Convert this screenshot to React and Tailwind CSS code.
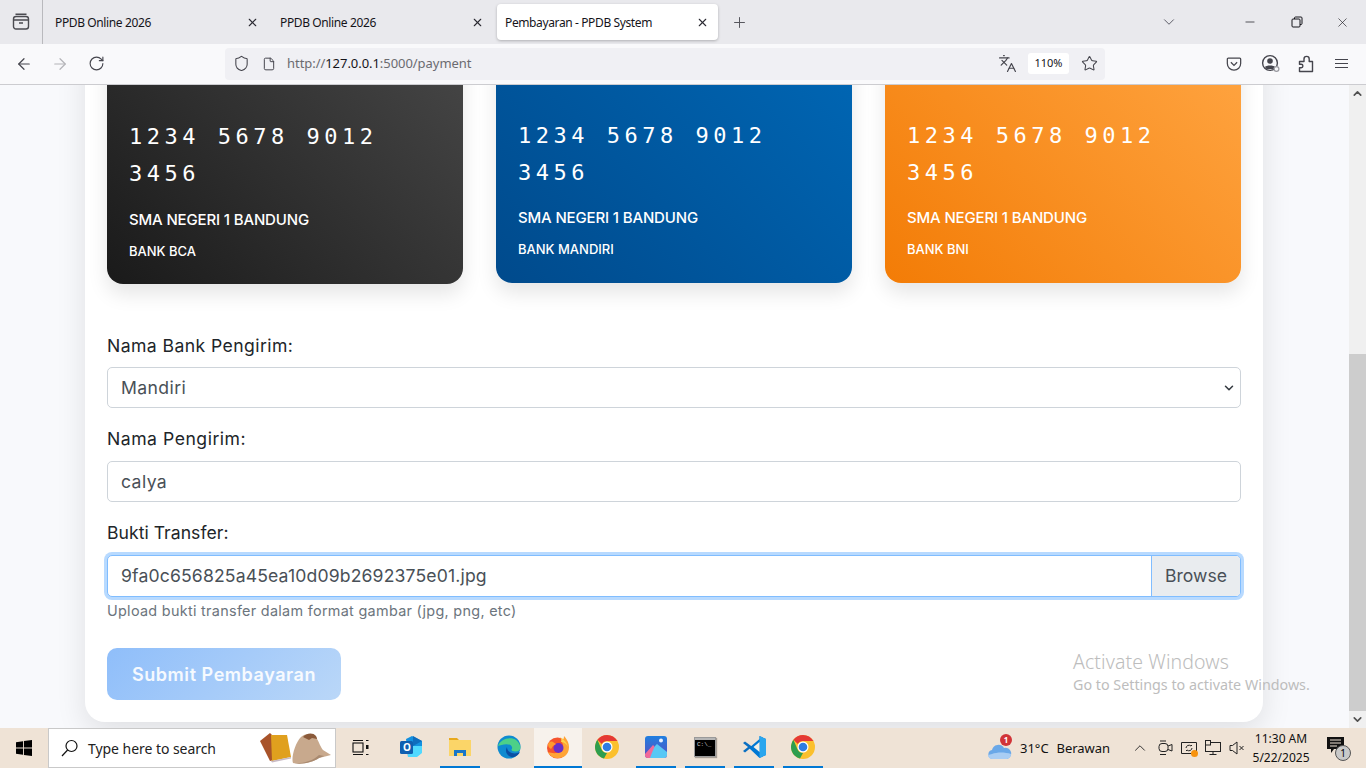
import { ArrowLeft, ArrowRight, ChevronDown, ChevronUp, File, Languages, Minus, Plus, RotateCw, Shield, Star, X } from 'lucide-react'

const bankCards = [
  { bank: 'BANK BCA', bg: 'bg-[linear-gradient(45deg,#1a1a1a,#474747)]', offset: 'pb-[23px]', gap: 'mt-[16px]' },
  { bank: 'BANK MANDIRI', bg: 'bg-[linear-gradient(45deg,#004a8c,#0067b5)]', offset: 'mb-px pb-[24px]', gap: 'mt-[15px]' },
  { bank: 'BANK BNI', bg: 'bg-[linear-gradient(45deg,#f37c06,#ffa542)]', offset: 'mb-px pb-[24px]', gap: 'mt-[15px]' },
]

const Tab = ({ title, active }) => (
  <div
    className={`flex h-9 w-[221px] shrink-0 items-center justify-between rounded pl-2 pr-[9px] ${
      active ? 'bg-white shadow-[0_1px_3px_rgba(0,0,0,0.25)]' : ''
    }`}
  >
    <span className="pt-[2px] text-[12px] tracking-[-0.38px] text-[#15141a]">{title}</span>
    <X size={13} strokeWidth={2} className="text-[#2b2a33]" />
  </div>
)

// firefox view
const ViewIcon = () => (
  <svg width="18" height="18" viewBox="0 0 18 18" fill="none" stroke="#4a4a50" strokeWidth="1.4">
    <rect x="1.5" y="3.5" width="15" height="12.5" rx="2.5" />
    <path d="M3.5 1.2h11M1.5 7h15M7 10h4" />
  </svg>
)

const PocketIcon = () => (
  <svg width="16" height="16" viewBox="0 0 18 18" fill="none" stroke="#45454d" strokeWidth="1.4">
    <path d="M2.5 2.5h13a1 1 0 0 1 1 1v5a7.5 7.5 0 0 1-15 0v-5a1 1 0 0 1 1-1z" />
    <path d="M5.5 7l3.5 3.5L12.5 7" />
  </svg>
)

const AccountIcon = () => (
  <svg width="20" height="20" viewBox="0 0 20 20" fill="none">
    <circle cx="9" cy="9" r="7.4" stroke="#45454d" strokeWidth="1.4" />
    <circle cx="9" cy="7" r="2.8" fill="#45454d" />
    <path d="M4 13c1-2 9-2 10 0l-1.5 2h-7z" fill="#45454d" />
    <circle cx="15.5" cy="15" r="2.4" fill="#f9f9fb" stroke="#9a9aa0" strokeWidth="1.2" />
  </svg>
)

const PuzzleIcon = () => (
  <svg width="16" height="18" viewBox="0 0 16 18" fill="none" stroke="#45454d" strokeWidth="1.4" strokeLinejoin="round">
    <path d="M1.5 6.500H6V4a2.600 2.600 0 0 1 5.200 0v2.500h3.300V16.500H1.500v-3.800h1.700a1.700 1.700 0 0 0 0-3.400H1.500z" />
  </svg>
)

const RestoreIcon = () => (
  <svg width="12" height="12" viewBox="0 0 12 12" fill="none" stroke="#15141a" strokeWidth="1">
    <rect x="1" y="3" width="8" height="8" rx="1" />
    <path d="M3.5 3V2a1 1 0 0 1 1-1H10a1 1 0 0 1 1 1v5.5a1 1 0 0 1-1 1H9" />
  </svg>
)

const WindowsLogo = () => (
  <svg width="16" height="16" viewBox="0 0 16 16" fill="#000">
    <path d="M0 2.2l7-1v6.4H0zM7.9 1.1L16 0v7.6H7.9zM0 8.4h7v6.4l-7-1zM7.9 8.4H16V16l-8.1-1.1z" />
  </svg>
)

const SearchMirrored = () => (
  <svg width="18" height="18" viewBox="0 0 18 18" fill="none" stroke="#111" strokeWidth="1.2">
    <circle cx="10.5" cy="7" r="5.5" />
    <path d="M6.6 11L1 17" />
  </svg>
)

const BookAndHat = () => (
  <svg width="72" height="32" viewBox="0 0 72 32">
    <path d="M0 9L10 1l2 2 2 25-4 1z" fill="#a8532a" />
    <path d="M11 3h16l4 22-19 4z" fill="#e0a01e" />
    <path d="M11 29l20-4v1.500l-19 4z" fill="#c7b9c4" />
    <path d="M33 31c-2-5 2-20 8-26 4-4 12-4 15 0 3 5 5 11 7 13l8 5-12 3c-6 4-17 7-26 5z" fill="#c8a98d" />
    <path d="M43 5c3-4 10-5 13-1 1 2 1 3 1 3l-5-1-3 2z" fill="#8a5a3a" />
    <path d="M33 31c9 1 20-2 26-8l5 1-5 2c-6 4-17 7-26 5z" fill="#a98a70" />
  </svg>
)

const TaskView = () => (
  <svg width="17" height="17" viewBox="0 0 17 17" fill="none" stroke="#111" strokeWidth="1.1">
    <rect x="1" y="4" width="10" height="9" />
    <path d="M1 1.5h10M1 15.5h10M14 1.5h2.5M14 15.5h2.5" />
    <rect x="14" y="6" width="2.5" height="4" fill="#111" stroke="none" />
  </svg>
)

const OutlookIcon = () => (
  <div className="relative h-6 w-6">
    <svg width="24" height="24" viewBox="0 0 24 24">
      <path d="M7 4l6-3 10 5v11l-6 5H9z" fill="#1490df" />
      <path d="M14 1l9 5-9 5z" fill="#0f6cbd" />
      <path d="M9 22V11h14v7l-5 4z" fill="#50d9ff" />
      <rect x="1" y="6" width="13" height="13" rx="1.5" fill="#0f5fb0" />
    </svg>
    <span className="absolute left-[4px] top-[6px] text-[10px] font-bold leading-[13px] text-white">O</span>
  </div>
)

const FolderIcon = () => (
  <svg width="22" height="20" viewBox="0 0 22 20">
    <path d="M0 1h8l2 2h-10z" fill="#e8a91d" />
    <rect y="3" width="22" height="16" fill="#fbd568" />
    <path d="M5 13h12v6h-3v-3H8v3H5z" fill="#1976c9" />
  </svg>
)

const EdgeIcon = () => (
  <svg width="24" height="24" viewBox="0 0 24 24">
    <circle cx="12" cy="12" r="11.5" fill="#0f8bd0" />
    <path d="M1 11C3 3 20-2 23.5 12c0 3-2 4.500-5 4.500-3 0-4-1-4-2 1-1 1-3-1-4.500-4-2-10 0-12.500 1z" fill="#4dd088" />
    <path d="M10 12c-3 5 1 11 7 10 3-1 5-3 6-5-3 2-8 2-11-.5-1.500-1.500-2-3-2-4.500z" fill="#0a4fa3" />
  </svg>
)

const FirefoxIcon = () => (
  <svg width="24" height="24" viewBox="0 0 24 24">
    <circle cx="11.500" cy="13" r="10.500" fill="#f5532d" />
    <path d="M2 17c2 6 11 8 17 4 4-3 5-9 3-14-1-2-2-4-4-6 0 3-1 4-3 5 3 3 3 9-1 11-4 2-9 1-12 0z" fill="#ffa436" />
    <path d="M14 2c3 2 7 5 8 10-1-3-4-5-7-5 1-2 0-3-1-5z" fill="#ffd54a" />
    <circle cx="12.500" cy="13" r="5" fill="#6b2fc7" />
    <path d="M2 9c1-2 3-3 5-2l3 2-3 2-2 3c-2-1-3-3-3-5z" fill="#ff9a2e" />
  </svg>
)

const ChromeIcon = () => (
  <svg width="24" height="24" viewBox="0 0 24 24">
    <circle cx="12" cy="12" r="12" fill="#fbc02d" />
    <path d="M12 0a12 12 0 0 1 10.400 6H12a6 6 0 0 0-5.200 3L2.400 4.800A12 12 0 0 1 12 0z" fill="#e53935" />
    <path d="M2.400 4.800L6.800 15a6 6 0 0 0 5.200 3L9 23.600A12 12 0 0 1 2.400 4.800z" fill="#2e9e4f" />
    <circle cx="12" cy="12" r="5.500" fill="#fff" />
    <circle cx="12" cy="12" r="4.300" fill="#2f7de1" />
  </svg>
)

const PhotosIcon = () => (
  <svg width="22" height="22" viewBox="0 0 22 22">
    <defs>
      <linearGradient id="photosBg" x1="0" y1="0" x2="0" y2="1">
        <stop offset="0" stopColor="#1f7fe0" />
        <stop offset="1" stopColor="#5a4fc0" />
      </linearGradient>
    </defs>
    <rect width="22" height="22" rx="3" fill="url(#photosBg)" />
    <circle cx="16" cy="4.500" r="2" fill="#e8f2ff" />
    <path d="M0 18l8-9 6 6 8 3v1a3 3 0 0 1-3 3H3a3 3 0 0 1-3-3z" fill="#f06a9a" />
    <path d="M5 22c2-5 4-12 7-14l10 8v3a3 3 0 0 1-3 3z" fill="#58c8f5" />
  </svg>
)

const CmdIcon = () => (
  <div className="flex h-[20px] w-[22px] flex-col border border-[#9a9a9a] bg-black shadow-[1px_1px_1px_rgba(0,0,0,0.3)]">
    <div className="h-[2px] bg-[#b5b5b5]" />
    <span className="pl-[2px] font-['Liberation_Mono',monospace] text-[6px] leading-[9px] text-[#d0d0d0]">C:\_</span>
  </div>
)

const VsCodeIcon = () => (
  <svg width="24" height="24" viewBox="0 0 24 24">
    <path d="M17.500 1L24 4v16l-6.500 3L7 13l10.500-9z" fill="#0078d4" />
    <path d="M17.500 1L24 4v16l-6.500 3z" fill="#2aa6ee" />
    <path d="M17.500 7v10l-6-5z" fill="#f2f0e8" />
    <path d="M3 6.500L1 8l5 4-5 4 2 1.500 5.500-4.500 2-1z" fill="#0a6fc2" />
  </svg>
)

const CloudIcon = () => (
  <div className="relative h-6 w-6">
    <svg width="24" height="20" viewBox="0 0 24 20" className="mt-1">
      <path d="M4.500 19a4.500 4.500 0 0 1-.5-8.900A6.500 6.500 0 0 1 16 8a5.500 5.500 0 0 1 3 11z" fill="#6aa8e8" />
      <path d="M4 14c5-2 13-2 19 0a5 5 0 0 1-4 5H4.500A4.500 4.500 0 0 1 0 15z" fill="#a9cdf3" />
    </svg>
    <span className="absolute -top-[2px] left-[12px] flex h-3 w-3 items-center justify-center rounded-full bg-[#d13438] text-[8px] font-bold leading-none text-white">
      1
    </span>
  </div>
)

const MeetIcon = () => (
  <svg width="15" height="16" viewBox="0 0 15 16" fill="none" stroke="#222" strokeWidth="1">
    <rect x="1" y="3.500" width="9" height="8" rx="3" />
    <path d="M10 6l4-1.500v6.500L10 9.500M2 1h6M2 14.500h6" />
  </svg>
)

const DefenderIcon = () => (
  <div className="relative h-4 w-4">
    <svg width="16" height="16" viewBox="0 0 16 16" fill="none" stroke="#222" strokeWidth="1">
      <path d="M.5 2.500h15v11H.5z" />
      <path d="M5 8a3 3 0 0 1 5-2l1-1M11 8a3 3 0 0 1-5 2l-1 1" />
    </svg>
    <span className="absolute -bottom-px -right-px h-[7px] w-[7px] rounded-full bg-[#f7930e]" />
  </div>
)

const NetworkIcon = () => (
  <svg width="16" height="16" viewBox="0 0 16 16" fill="none" stroke="#222" strokeWidth="1">
    <rect x=".5" y="2.500" width="15" height="9" />
    <rect x=".5" y=".5" width="5" height="4.500" fill="#efe3d6" />
    <path d="M8 11.500v3M4.500 14.500h7" />
  </svg>
)

const MuteIcon = () => (
  <svg width="16" height="16" viewBox="0 0 16 16" fill="none" stroke="#222" strokeWidth="1">
    <path d="M1 5.500h2.500L8 2v12l-4.500-3.500H1z" />
    <path d="M10.500 6l4 4M14.500 6l-4 4" />
  </svg>
)

const NotifyIcon = () => (
  <div className="relative h-6 w-6">
    <svg width="18" height="18" viewBox="0 0 18 18" className="ml-px mt-[2px]">
      <path d="M0 0h17v12H7l-3 4v-4H0z" fill="#111" />
      <path d="M3 3h11M3 6h11M3 9h7" stroke="#efe3d6" strokeWidth="1" />
    </svg>
    <span className="absolute left-[9px] top-[8px] flex h-4 w-4 items-center justify-center rounded-full border border-[#555] bg-[#c9c9c9] text-[10px] leading-none text-black">
      1
    </span>
  </div>
)

const TaskIcon = ({ active, running, children, className = '' }) => (
  <div className={`flex h-10 w-12 shrink-0 justify-center ${active ? 'bg-[#f7f2ec]' : ''} ${className}`}>
    <div
      className={`flex h-10 items-center justify-center border-b-[2px] ${active ? 'w-12' : 'w-10'} ${
        running ? 'border-[#0078d4]' : 'border-transparent'
      }`}
    >
      {children}
    </div>
  </div>
)

const Field = ({ label, value, select, mt, gap, labelClass }) => (
  <div className={mt}>
    <label className={`block text-[17.6px] leading-[26px] text-[#212529] ${labelClass}`}>{label}</label>
    <div
      className={`${gap} flex h-[41px] items-center justify-between rounded-[5px] border border-[#ced4da] bg-white pl-[13px] pr-[4px] text-[17.6px] tracking-[0.4px] text-[#495057]`}
    >
      <span className="pt-px">{value}</span>
      {select && <ChevronDown size={14} strokeWidth={2.6} className="text-[#343a40]" />}
    </div>
  </div>
)

const App = () => {
  return (
    <div className="relative flex h-screen w-[1366px] flex-col overflow-hidden font-['Inter',sans-serif]">
      {/* browser tabs */}
      <div className="flex h-11 shrink-0 items-center bg-[#e9e9ed] font-['Noto_Sans',sans-serif]">
        <div className="flex h-full w-[43px] shrink-0 items-center justify-center border-r border-[#b9b9bd]">
          <ViewIcon />
        </div>
        <div className="ml-[4px] flex items-center">
          <Tab title="PPDB Online 2026" />
          <div className="ml-[4px]">
            <Tab title="PPDB Online 2026" />
          </div>
          <div className="ml-[4px]">
            <Tab title="Pembayaran - PPDB System" active />
          </div>
        </div>
        <Plus size={17} strokeWidth={1.4} className="ml-[13px] text-[#55555c]" />
        <div className="ml-auto flex items-center">
          <ChevronDown size={18} strokeWidth={1.3} className="mr-[65px] text-[#5b5b66]" />
          <Minus size={14} strokeWidth={1.2} className="mr-[34px] text-[#15141a]" />
          <RestoreIcon />
          <X size={15} strokeWidth={1} className="ml-[32px] mr-[16px] text-[#15141a]" />
        </div>
      </div>

      {/* toolbar */}
      <div className="flex h-[41px] shrink-0 items-center border-b border-[#ccccd0] bg-[#f9f9fb] pb-px">
        <ArrowLeft size={18} strokeWidth={1.6} className="ml-[15px] text-[#45454d]" />
        <ArrowRight size={18} strokeWidth={1.6} className="ml-[18px] text-[#b4b4b8]" />
        <RotateCw size={17} strokeWidth={1.6} className="ml-[19px] text-[#45454d]" />
        <div className="ml-[120px] flex h-8 w-[880px] items-center rounded bg-[#f0f0f4] pl-[8px] pr-[7px]">
          <Shield size={17} strokeWidth={1.5} className="text-[#45454d]" />
          <File size={14} strokeWidth={1.7} className="ml-[12px] text-[#45454d]" />
          <span className="ml-[11px] pt-px font-['Noto_Sans',sans-serif] text-[13px] tracking-[-0.05px] text-[#6b6b70]">
            http://<span className="text-[#15141a]">127.0.0.1</span>:5000/payment
          </span>
          <div className="ml-auto flex items-center">
            <Languages size={19} strokeWidth={1.5} className="text-[#45454d]" />
            <span className="ml-[11px] flex h-[21px] w-[41px] items-center justify-center rounded-[3px] bg-white font-['Noto_Sans',sans-serif] text-[11px] text-[#15141a]">
              110%
            </span>
            <Star size={17} strokeWidth={1.5} className="ml-[12px] text-[#45454d]" />
          </div>
        </div>
        <div className="ml-[121px] flex items-center">
          <PocketIcon />
          <div className="ml-[19px] mt-px">
            <AccountIcon />
          </div>
          <div className="ml-[17px]">
            <PuzzleIcon />
          </div>
          <div className="ml-[21px] flex w-[13px] flex-col gap-[3px]">
            <div className="h-px bg-[#45454d]" />
            <div className="h-px bg-[#45454d]" />
            <div className="h-px bg-[#45454d]" />
          </div>
        </div>
      </div>

      {/* page */}
      <div className="flex min-h-0 flex-1">
        <div className="flex min-w-0 flex-1 flex-col justify-end overflow-hidden bg-[#f8f9fc] pb-[6px] pl-[85px] pr-[86px]">
          <div className="shrink-0 rounded-[20px] bg-white px-[22px] pb-[22px] shadow-[0_10px_30px_rgba(0,0,0,0.1)]">
            <div className="flex items-end justify-between">
              {bankCards.map((card) => (
                <div
                  key={card.bank}
                  className={`flex h-[240px] w-[356px] flex-col justify-end rounded-[16px] px-[22px] text-white shadow-[0_10px_20px_rgba(0,0,0,0.1)] ${card.bg} ${card.offset}`}
                >
                  <div className="w-[300px] font-['DejaVu_Sans_Mono',monospace] text-[22px] leading-[37px] tracking-[4.5px]">
                    1234 5678 9012 3456
                  </div>
                  <div className={`${card.gap} text-[15px] font-medium leading-[24px] tracking-[-0.15px]`}>SMA NEGERI 1 BANDUNG</div>
                  <div className="mt-[9px] text-[13px] font-medium leading-[20px]">{card.bank}</div>
                </div>
              ))}
            </div>

            <Field label="Nama Bank Pengirim:" labelClass="tracking-[0.42px]" value="Mandiri" select mt="mt-[49px]" gap="mt-[8px]" />
            <Field label="Nama Pengirim:" labelClass="tracking-[0.52px]" value="calya" mt="mt-[18px]" gap="mt-[9px]" />

            <div className="mt-[18px]">
              <label className="block text-[17.6px] leading-[26px] tracking-[0.03px] text-[#212529]">Bukti Transfer:</label>
              <div className="mt-[9px] flex h-[42px] items-stretch overflow-hidden rounded-[5px] border border-[#80bdff] bg-white text-[17.6px] text-[#495057] shadow-[0_0_0_3px_#b8daff]">
                <span className="flex flex-1 items-center pl-[13px] tracking-[0.15px]">9fa0c656825a45ea10d09b2692375e01.jpg</span>
                <span className="flex w-[89px] items-center justify-center border-l border-[#80bdff] bg-[#e9ecef]">Browse</span>
              </div>
              <div className="mt-[3px] text-[14.4px] leading-[22px] tracking-[0.3px] text-[#6c757d]">
                Upload bukti transfer dalam format gambar (jpg, png, etc)
              </div>
            </div>

            <button className="mt-[26px] block h-[52px] w-[234px] rounded-[10px] bg-[linear-gradient(135deg,#8fbefa,#bad7f8)] text-[18px] font-semibold tracking-[0.55px] text-white/90">
              Submit Pembayaran
            </button>
          </div>
        </div>

        {/* scrollbar */}
        <div className="flex w-[17px] shrink-0 flex-col bg-[#f0f0f0]">
          <div className="flex h-[17px] items-center justify-center">
            <ChevronUp size={13} strokeWidth={3} className="text-[#505050]" />
          </div>
          <div className="mt-[252px] h-[357px] bg-[#cdcdcd]" />
          <div className="mt-auto flex h-[17px] items-center justify-center">
            <ChevronDown size={13} strokeWidth={3} className="text-[#505050]" />
          </div>
        </div>
      </div>

      {/* taskbar */}
      <div className="flex h-10 shrink-0 items-center bg-[#efe3d6] font-['Noto_Sans',sans-serif] text-[#111]">
        <div className="flex w-12 shrink-0 justify-center">
          <WindowsLogo />
        </div>
        <div className="flex h-10 w-[288px] shrink-0 items-center border border-[#c9c9c9] bg-white pl-[12px]">
          <SearchMirrored />
          <span className="ml-[9px] text-[14px] tracking-[-0.05px] text-[#222]">Type here to search</span>
          <div className="ml-auto mr-[3px]">
            <BookAndHat />
          </div>
        </div>
        <div className="flex items-center gap-px">
          <TaskIcon>
            <TaskView />
          </TaskIcon>
          <TaskIcon className="ml-[2px]">
            <OutlookIcon />
          </TaskIcon>
          <TaskIcon running>
            <FolderIcon />
          </TaskIcon>
          <TaskIcon>
            <EdgeIcon />
          </TaskIcon>
          <TaskIcon active running>
            <FirefoxIcon />
          </TaskIcon>
          <TaskIcon>
            <ChromeIcon />
          </TaskIcon>
          <TaskIcon running>
            <PhotosIcon />
          </TaskIcon>
          <TaskIcon running>
            <CmdIcon />
          </TaskIcon>
          <TaskIcon running>
            <VsCodeIcon />
          </TaskIcon>
          <TaskIcon running>
            <ChromeIcon />
          </TaskIcon>
        </div>
        <div className="ml-auto flex items-center">
          <CloudIcon />
          <span className="ml-[8px] pt-[2px] text-[13px]">31°C</span>
          <span className="ml-[8px] pt-[2px] text-[13px] tracking-[-0.05px]">Berawan</span>
          <ChevronUp size={18} strokeWidth={1.2} className="ml-[21px] text-[#222]" />
          <div className="ml-[9px]">
            <MeetIcon />
          </div>
          <div className="ml-[8px]">
            <DefenderIcon />
          </div>
          <div className="ml-[8px]">
            <NetworkIcon />
          </div>
          <div className="ml-[8px]">
            <MuteIcon />
          </div>
          <div className="ml-[10px] flex w-[52px] flex-col items-center whitespace-nowrap text-[12px] leading-[19px]">
            <span>11:30 AM</span>
            <span>5/22/2025</span>
          </div>
          <div className="ml-[19px] mr-[16px]">
            <NotifyIcon />
          </div>
        </div>
      </div>

      {/* windows watermark */}
      <div className="pointer-events-none absolute left-[1073px] top-[650px] font-['Noto_Sans',sans-serif] text-[#bdbdbd]">
        <div className="text-[19.5px] font-light leading-[24px] tracking-[0.1px]">Activate Windows</div>
        <div className="text-[14.3px] leading-[22px]">Go to Settings to activate Windows.</div>
      </div>
    </div>
  )
}

export default App
